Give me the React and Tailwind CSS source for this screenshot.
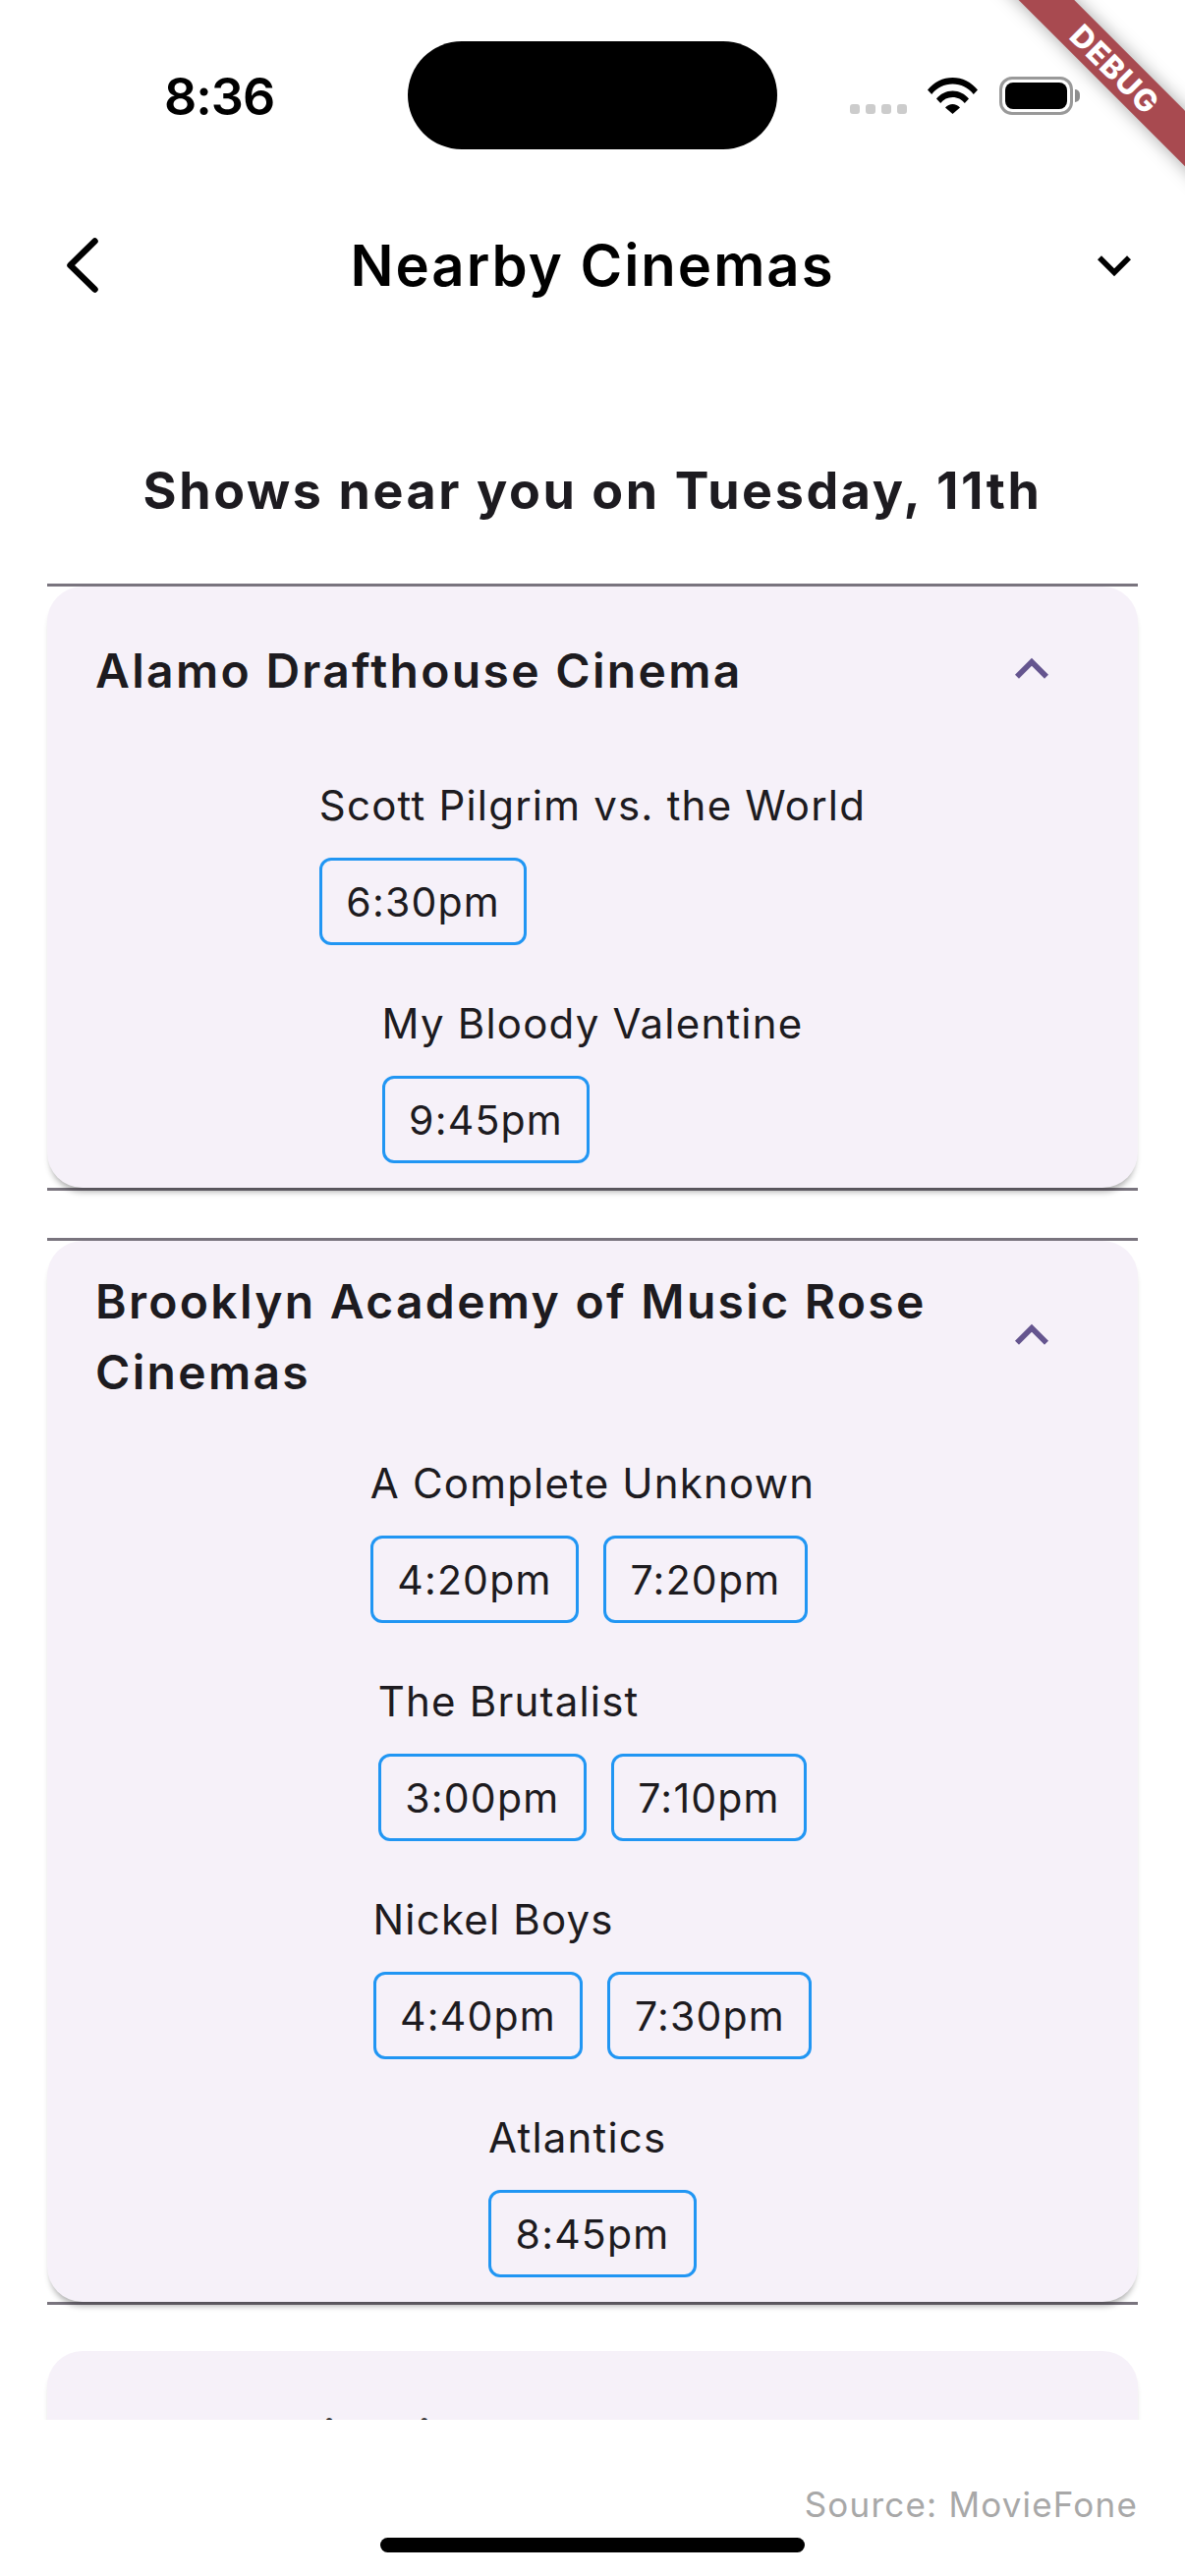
function Chip({ t }) {
  return (
    <div className="h-[89px] px-[24.5px] flex items-center justify-center border-[3px] border-[#2196f3] rounded-[12px] text-[41px] tracking-[1.2px] font-normal text-[#1d1b20] leading-none pt-[1px]">
      {t}
    </div>
  );
}

function Movie({ title, times }) {
  return (
    <div className="inline-flex flex-col items-start py-[25px]">
      <div className="h-[60px] leading-[60px] text-[42px] tracking-[1.2px] text-[#1d1b20] whitespace-nowrap mb-[23px]">{title}</div>
      <div className="flex gap-[25px]">
        {times.map((t) => <Chip key={t} t={t} />)}
      </div>
    </div>
  );
}

function Less() {
  return (
    <svg viewBox="0 0 24 24" className="w-[68px] h-[68px] shrink-0 mr-[74px] -ml-[10px]" fill="#65558f">
      <path d="M12 8l-6 6 1.41 1.41L12 10.83l4.59 4.58L18 14z" />
    </svg>
  );
}

function Card({ name, movies, lines = true }) {
  return (
    <div className={lines ? "border-y-[3px] border-[#79747e]" : "-mt-px"}>
      <div className="bg-[#f6f1f9] rounded-[36px] shadow-[0_7px_6px_-3px_rgba(0,0,0,0.32)]">
        <div className={lines ? "min-h-[168px] flex items-center pl-[49px] py-[24px]" : "min-h-[168px] flex items-center pl-[49px] pt-[27px] pb-[24px]"}>
          <div className="flex-1 text-[48px] leading-[72px] font-semibold tracking-[2.3px] text-[#1d1b20] pt-[2px] -mb-[2px]">{name}</div>
          <Less />
        </div>
        <div className="flex flex-col items-center">
          {movies.map((m) => <Movie key={m.title} {...m} />)}
        </div>
      </div>
    </div>
  );
}

export default function App() {
  return (
    <div className="relative w-[1206px] h-[2622px] overflow-hidden bg-white font-['Inter','Liberation_Sans',sans-serif]">
      {/* status bar */}
      <div className="h-[192px] flex items-start">
        <div className="w-[415px] pl-[167px] pt-[69px] text-[52px] leading-[60px] font-semibold text-black tracking-[-1px]">8:36</div>
        <div className="w-[376px] h-[110px] mt-[42px] bg-black rounded-[55px]" />
        <div className="flex items-start ml-[74px]">
          <div className="flex gap-[6px] mt-[106px]">
            <div className="w-[10px] h-[10px] rounded-[3px] bg-[#cccccc]" />
            <div className="w-[10px] h-[10px] rounded-[3px] bg-[#cccccc]" />
            <div className="w-[10px] h-[10px] rounded-[3px] bg-[#cccccc]" />
            <div className="w-[10px] h-[10px] rounded-[3px] bg-[#cccccc]" />
          </div>
          <svg viewBox="0 0 51 37" className="w-[51px] h-[37px] mt-[79px] ml-[21px]" fill="black">
            <path d="M0 12.5C6.5 4.5 15.5 0 25.5 0S44.500 4.500 51 12.500L46.800 17C41.500 10.300 34 6.500 25.500 6.500S9.500 10.300 4.200 17Z" />
            <path d="M9 21.500C13 16.500 19 13.500 25.500 13.500S38 16.500 42 21.500L37.800 26C34.800 22.300 30.500 20 25.500 20S16.200 22.300 13.200 26Z" />
            <path d="M18 30.500C20 28.300 22.700 27 25.500 27S31 28.300 33 30.500L25.500 37Z" />
          </svg>
          <div className="flex items-center mt-[78px] ml-[22px]">
            <div className="w-[75px] h-[39px] rounded-[13px] border-[3.5px] border-[#999999] p-[3px]">
              <div className="w-full h-full bg-black rounded-[8px]" />
            </div>
            <div className="w-[5px] h-[13px] ml-[2px] bg-[#8e8e8e] rounded-r-[5px]" />
          </div>
        </div>
      </div>

      {/* app bar */}
      <div className="h-[156px] grid grid-cols-[1fr_auto_1fr] items-center">
        <div className="pl-[68px]">
          <svg viewBox="0 0 32 56" className="w-[32px] h-[56px]" fill="none" stroke="black" strokeWidth="6.5" strokeLinecap="round" strokeLinejoin="round">
            <path d="M28.500 3.500L3.500 28l25 24.500" />
          </svg>
        </div>
        <div className="text-[58px] leading-[72px] font-semibold text-black tracking-[2px]">Nearby Cinemas</div>
        <div className="flex justify-end pr-[38px]">
          <svg viewBox="0 0 24 24" className="w-[68px] h-[68px]" fill="black">
            <path d="M16.59 8.59L12 13.17 7.41 8.59 6 10l6 6 6-6z" />
          </svg>
        </div>
      </div>

      {/* heading */}
      <div className="h-[246px] pt-[58px] flex items-center justify-center text-[52px] font-bold tracking-[2.6px] text-[#1d1b20]">
        Shows near you on Tuesday, 11th
      </div>

      {/* list */}
      <div className="h-[1869px] overflow-hidden px-[48px] flex flex-col gap-[48px]">
        <Card
          name="Alamo Drafthouse Cinema"
          movies={[
            { title: "Scott Pilgrim vs. the World", times: ["6:30pm"] },
            { title: "My Bloody Valentine", times: ["9:45pm"] },
          ]}
        />
        <Card
          name="Brooklyn Academy of Music Rose Cinemas"
          movies={[
            { title: "A Complete Unknown", times: ["4:20pm", "7:20pm"] },
            { title: "The Brutalist", times: ["3:00pm", "7:10pm"] },
            { title: "Nickel Boys", times: ["4:40pm", "7:30pm"] },
            { title: "Atlantics", times: ["8:45pm"] },
          ]}
        />
        <Card lines={false} name="Cobble Hill Cinemas" movies={[]} />
      </div>

      {/* footer */}
      <div className="h-[159px] px-[48px] flex flex-col">
        <div className="mt-[63px] h-[46px] leading-[46px] text-right text-[35px] tracking-[1.2px] text-[#a8a8a8]">Source: MovieFone</div>
        <div className="mt-[11px] mx-auto w-[432px] h-[15px] rounded-full bg-black" />
      </div>

      {/* debug banner */}
      <div className="absolute left-[968px] top-[50px] w-[334px] h-[40px] rotate-45 bg-[#a84a50] shadow-[0_0_18px_rgba(0,0,0,0.35)] flex items-center justify-center text-white font-extrabold text-[31px] leading-none tracking-[1px]">
        DEBUG
      </div>
    </div>
  );
}
